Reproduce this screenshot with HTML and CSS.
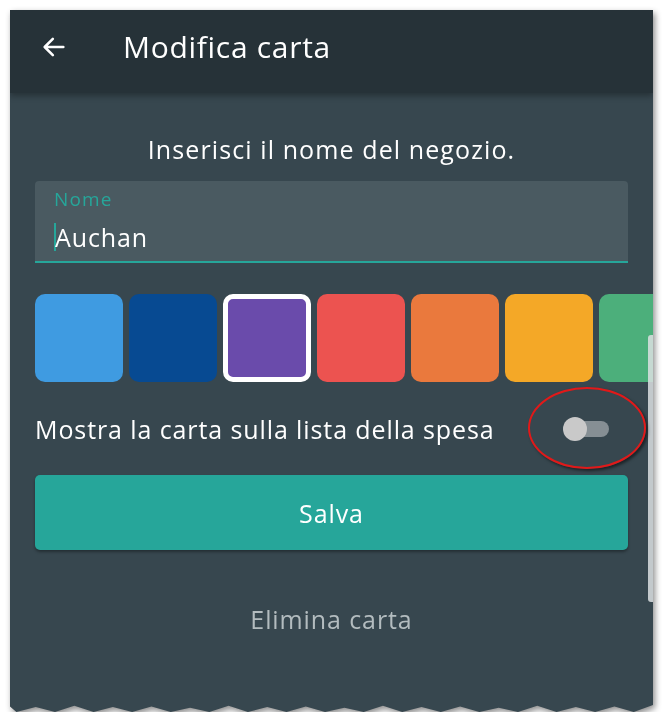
FILE: index.html
```html
<!DOCTYPE html>
<html lang="it">
<head>
    <meta charset="UTF-8">
    <meta name="viewport" content="width=device-width, initial-scale=1.0">
    <title>Modifica carta</title>
    <link rel="stylesheet" href="styles.css">
</head>
<body>
    <div id="shot">
        <div id="screen">
            <header id="app-bar">
                <svg class="back-icon" viewBox="0 0 24 24" width="28" height="28">
                    <path d="M20 12H5M11 5l-7 7 7 7" fill="none" stroke="#fff" stroke-width="2.2" stroke-linecap="round" stroke-linejoin="round"/>
                </svg>
                <h1>Modifica carta</h1>
            </header>

            <main id="content">
                <p id="hint">Inserisci il nome del negozio.</p>

                <div class="field">
                    <label>Nome</label>
                    <div class="value"><span class="caret"></span>Auchan</div>
                </div>

                <div id="swatches">
                    <div class="swatch" style="background: #3f9be1;"></div>
                    <div class="swatch" style="background: #074a92;"></div>
                    <div class="swatch selected" style="background: #6a4bab;"></div>
                    <div class="swatch" style="background: #ec5350;"></div>
                    <div class="swatch" style="background: #ea793d;"></div>
                    <div class="swatch" style="background: #f4a827;"></div>
                    <div class="swatch" style="background: #4caf7b;"></div>
                </div>

                <div id="toggle-row">
                    <span>Mostra la carta sulla lista della spesa</span>
                    <div class="toggle">
                        <div class="track"></div>
                        <div class="thumb"></div>
                    </div>
                </div>

                <button id="save-btn">Salva</button>

                <a id="delete-link">Elimina carta</a>
            </main>

            <div id="scrollbar"></div>
        </div>
        <!-- red annotation drawn over the screenshot -->
        <div id="mark"></div>
    </div>
</body>
</html>
```

FILE: styles.css
```css
:root {
    --bar-color: #263238;
    --bg-color: #37474f;
    --field-color: #4a5a61;
    --teal: #26a69a;
    --text-color: #ffffff;
    --muted-text-color: #b3bcbf;
}

body {
    margin: 0;
    background: #ffffff;
    font-family: "Open Sans", "Noto Sans", sans-serif;
    color: var(--text-color);
}

#shot {
    position: relative;
    width: 643px;
    height: 702px;
    margin: 10px 0 0 10px;
    filter: drop-shadow(2px 3px 3px rgba(0, 0, 0, 0.45));
}

#screen {
    position: relative;
    height: 100%;
    background: var(--bg-color);
    overflow: hidden;
    clip-path: polygon(0 0, 100% 0, 100% 99%, 97% 100%, 94% 99.2%, 91% 100%, 88% 99.3%, 85% 100%, 82% 99.1%, 79% 100%, 76% 99.4%, 73% 100%, 70% 99.2%, 67% 100%, 64% 99.3%, 61% 100%, 58% 99.1%, 55% 100%, 52% 99.4%, 49% 100%, 46% 99.2%, 43% 100%, 40% 99.3%, 37% 100%, 34% 99.1%, 31% 100%, 28% 99.4%, 25% 100%, 22% 99.2%, 19% 100%, 16% 99.3%, 13% 100%, 10% 99.1%, 7% 100%, 4% 99.3%, 1% 100%, 0 99.2%);
}

#app-bar {
    display: flex;
    align-items: center;
    height: 83px;
    padding: 0 0 0 30px;
    background: var(--bar-color);
    box-shadow: 0 3px 6px rgba(0, 0, 0, 0.3);
    position: relative;
}

.back-icon {
    margin-top: -10px;
}

h1 {
    margin: -10px 0 0 55px;
    font-size: 30px;
    font-weight: normal;
    letter-spacing: 0.7px;
}

#content {
    display: flex;
    flex-direction: column;
    padding: 0 25px;
    font-size: 25px;
    letter-spacing: 0.9px;
}

#hint {
    margin: 40px 0 0 0;
    text-align: center;
    line-height: 32px;
    letter-spacing: 1.1px;
}

.field {
    margin-top: 16px;
    height: 82px;
    background: var(--field-color);
    border-bottom: 2px solid var(--teal);
    border-radius: 4px 4px 0 0;
    padding: 0 0 0 19px;
    box-sizing: border-box;
}

.field label {
    display: block;
    margin-top: 8px;
    color: var(--teal);
    font-size: 19px;
    line-height: 20px;
    letter-spacing: 1.1px;
}

.value {
    margin-top: 12px;
    line-height: 32px;
    display: flex;
    align-items: center;
}

.caret {
    width: 2px;
    height: 28px;
    background: var(--teal);
    margin-right: -1px;
}

#swatches {
    display: flex;
    gap: 6px;
    margin-top: 31px;
    margin-right: -25px;
}

.swatch {
    flex: 0 0 88px;
    height: 88px;
    border-radius: 10px;
    box-sizing: border-box;
}

.swatch.selected {
    border: 5px solid #ffffff;
}

#toggle-row {
    display: flex;
    align-items: center;
    justify-content: space-between;
    margin-top: 30px;
    height: 34px;
}

.toggle {
    position: relative;
    width: 48px;
    height: 24px;
    margin-right: 17px;
}

.track {
    position: absolute;
    left: 8px;
    top: 4px;
    width: 38px;
    height: 16px;
    border-radius: 8px;
    background: #868f94;
}

.thumb {
    position: absolute;
    left: 0;
    top: 0;
    width: 24px;
    height: 24px;
    border-radius: 50%;
    background: #c9c9c9;
}

#save-btn {
    margin-top: 29px;
    height: 75px;
    border: none;
    border-radius: 5px;
    background: var(--teal);
    color: var(--text-color);
    font-family: inherit;
    font-size: inherit;
    letter-spacing: inherit;
    box-shadow: 0 2px 3px rgba(0, 0, 0, 0.35);
}

#delete-link {
    margin-top: 53px;
    text-align: center;
    color: var(--muted-text-color);
    line-height: 32px;
}

#scrollbar {
    position: absolute;
    right: 0;
    top: 325px;
    width: 5px;
    height: 267px;
    border-radius: 3px 0 0 3px;
    background: rgba(220, 225, 226, 0.85);
}

#mark {
    position: absolute;
    left: 518px;
    top: 377px;
    width: 114px;
    height: 78px;
    border: 2px solid #e11919;
    border-radius: 50%;
    box-shadow: 2px 2px 3px rgba(0, 0, 0, 0.5);
}
```
